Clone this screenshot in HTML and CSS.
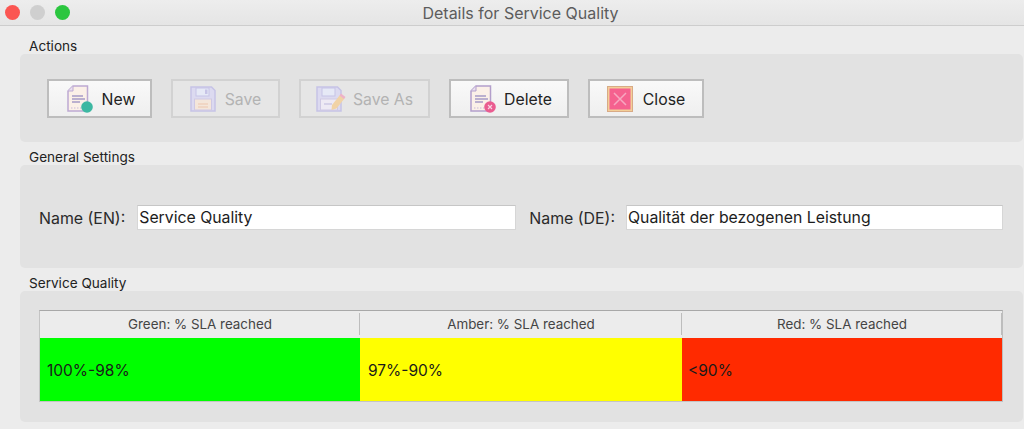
FILE: index.html
```html
<!DOCTYPE html>
<html lang="en">
<head>
<meta charset="utf-8">
<title>Details for Service Quality</title>
<link rel="stylesheet" href="styles.css">
</head>
<body>
<div class="window">
  <header class="titlebar">
    <div class="lights"><span class="light red"></span><span class="light grey"></span><span class="light green"></span></div>
    <div class="title">Details for Service Quality</div>
  </header>
  <main class="content">
    <div class="caption">Actions</div>
    <section class="group actions">
      <button class="btn b-new">
        <svg class="ico" width="26" height="28" viewBox="0 0 26 28"><path d="M6 1h14.500v25H1V6z" fill="#fbf0e8" stroke="#bda9d2" stroke-width="1.500"/><path d="M6 1v5H1" fill="#e9dff0" stroke="#bda9d2"/><path d="M5 11h11M5 14h13M5 17h8" stroke="#a79bc6" stroke-width="1.500"/><path d="M4 23h10" stroke="#c9b8d8" stroke-dasharray="1.500 1.500"/><circle cx="20" cy="22" r="5.800" fill="#3db8a2"/></svg>
        <span>New</span>
      </button>
      <button class="btn off b-save">
        <svg class="ico" width="26" height="26" viewBox="0 0 26 26"><path d="M1 1h20.500l3.500 3.500V25H1z" fill="#dcdaf0" stroke="#c6c3e6" stroke-width="1.500"/><rect x="6" y="2" width="13" height="8" fill="#e6e9f6" stroke="#c6c3e6"/><rect x="15" y="3.500" width="2.500" height="4.500" fill="#c6c3e6"/><rect x="4.500" y="13" width="17" height="11" fill="#f4e6da" stroke="#cfc9e4"/><path d="M8 18h10M8 21h10" stroke="#ecc6ae"/></svg>
        <span>Save</span>
      </button>
      <button class="btn off b-saveas">
        <svg class="ico" width="30" height="26" viewBox="0 0 30 26"><path d="M1 1h20.500l3.500 3.500V25H1z" fill="#dcdaf0" stroke="#c6c3e6" stroke-width="1.500"/><rect x="6" y="2" width="13" height="8" fill="#e6e9f6" stroke="#c6c3e6"/><rect x="4.500" y="13" width="17" height="11" fill="#eeeaf4" stroke="#cfc9e4"/><path d="M8 18h8" stroke="#bdb8dc"/><path d="M16 19l8-10 4.500 3.500-8 10-5 1.500z" fill="#f1d3a6"/><path d="M23.500 9.500l1.500-2 4.500 3.500-1.500 2z" fill="#eeb3c8"/></svg>
        <span>Save As</span>
      </button>
      <button class="btn b-delete">
        <svg class="ico" width="26" height="28" viewBox="0 0 26 28"><path d="M6 1h14.500v25H1V6z" fill="#fbf0e8" stroke="#b39fcb" stroke-width="1.500"/><path d="M6 1v5H1" fill="#e9dff0" stroke="#b39fcb"/><path d="M5 11h11M5 14h13M5 17h8" stroke="#a79bc6" stroke-width="1.500"/><path d="M4 23h10" stroke="#c9b8d8" stroke-dasharray="1.500 1.500"/><circle cx="20" cy="22" r="5.800" fill="#ea5c90"/><path d="M18 20l4 4M22 20l-4 4" stroke="#f8d5e2" stroke-width="1.100"/></svg>
        <span>Delete</span>
      </button>
      <button class="btn b-close">
        <svg class="ico" width="26" height="26" viewBox="0 0 26 26"><rect x=".5" y=".5" width="25" height="25" fill="#f3cf98" stroke="#d8aa86"/><rect x="2.500" y="2.500" width="21" height="21" fill="#f5618f"/><path d="M7 7l12 12M19 7L7 19" stroke="#f7a8c0" stroke-width="1.500"/></svg>
        <span>Close</span>
      </button>
    </section>
    <div class="caption">General Settings</div>
    <section class="group general">
      <label class="name-label">Name (EN):</label>
      <div class="field f-en">Service Quality</div>
      <label class="name-label">Name (DE):</label>
      <div class="field f-de">Qualität der bezogenen Leistung</div>
    </section>
    <div class="caption">Service Quality</div>
    <section class="group quality">
      <div class="table">
        <div class="th">Green: % SLA reached</div>
        <div class="th">Amber: % SLA reached</div>
        <div class="th">Red: % SLA reached</div>
        <div class="td c-green">100%-98%</div>
        <div class="td c-amber">97%-90%</div>
        <div class="td c-red">&lt;90%</div>
      </div>
    </section>
  </main>
</div>
</body>
</html>
```
FILE: styles.css
```css
* { box-sizing: border-box; }
html, body { margin: 0; height: 100%; }
body { background: #ececec; font-family: Inter, "Liberation Sans", sans-serif; color: #1c1c1c; overflow: hidden; }
.window { width: 1024px; height: 429px; display: flex; flex-direction: column; }
.titlebar { height: 26px; flex: none; display: flex; align-items: center; justify-content: center; background: linear-gradient(#ededed, #e5e5e5); border-bottom: 1px solid #cdcdcd; position: relative; }
.lights { position: absolute; left: 5px; top: 5px; display: flex; gap: 10px; }
.light { width: 15px; height: 15px; border-radius: 50%; }
.red { background: #fb5652; }
.grey { background: #cfcfcf; }
.green { background: #2bc63f; }
.title { font-size: 16px; color: #5c5c5c; padding-left: 17px; }
.content { flex: 1; padding: 12px 0 0 20px; display: flex; flex-direction: column; }
.caption { font-size: 13.600px; line-height: 16px; height: 16px; padding-left: 9px; color: #222; }
.group { background: #e2e2e2; border-radius: 5px; width: 1003px; }
.actions { height: 88px; display: flex; align-items: center; padding: 0 0 0 27px; gap: 19px; margin-bottom: 7px; }
.btn { height: 39px; display: flex; align-items: center; justify-content: center; gap: 9px; background: linear-gradient(#f9f9f9, #efefef); border: 2px solid #bdbdbd; border-radius: 0; font: 15.800px Inter, "Liberation Sans", sans-serif; color: #222; padding: 1px 0 0; }
.btn span { padding-top: 2px; }
.btn.off { background: #e6e6e6; border-color: #d2d2d2; color: #b3b3b3; }
.b-new { width: 105px; padding-left: 3px; }
.b-save { width: 109px; }
.b-saveas { width: 131px; gap: 7px; }
.b-delete { width: 120px; gap: 8px; padding-left: 4px; }
.b-close { width: 116px; gap: 10px; }
.general { height: 103px; display: flex; align-items: center; padding: 2px 20px 0 19px; margin-bottom: 7px; }
.name-label { font-size: 15.900px; line-height: 27px; color: #2a2a2a; white-space: nowrap; flex: none; padding-top: 1px; }
.field { height: 25px; background: #fff; border: 1px solid #d6d6d6; border-top-color: #c6c6c6; font-size: 15.800px; line-height: 24px; padding-left: 1px; color: #1c1c1c; }
.f-en { width: 379px; margin: 0 13px 0 12px; }
.f-de { width: 377px; margin-left: 11px; }
.quality { height: 131px; padding: 19px 20px 0 19px; }
.table { display: grid; grid-template-columns: 320px 322px 1fr; grid-template-rows: 27px 63px; border-top: 1px solid #a8a8a8; border-left: 1px solid #c4c4c4; border-right: 1px solid #bdbdbd; border-bottom: 1px solid #c4c4c4; background: #ececec; }
.th { font-size: 13.400px; line-height: 26px; text-align: center; color: #444; background: linear-gradient(#bdbdbd, #bdbdbd) right 2px / 1px 22px no-repeat #ececec; }
.td { font-size: 15.500px; line-height: 65px; padding-left: 6px; color: #1a1a1a; }
.c-green { background: #00ff00; padding-left: 7px; }
.c-amber { background: #ffff00; padding-left: 8px; }
.c-red { background: #ff2a00; }
```
